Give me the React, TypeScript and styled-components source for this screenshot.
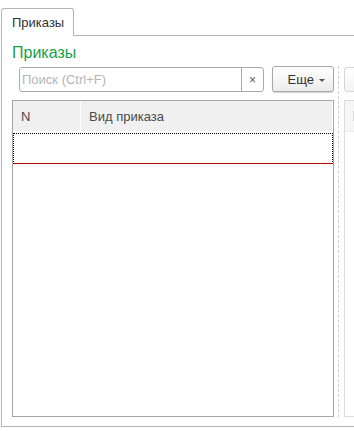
import React from "react";
import styled, { createGlobalStyle } from "styled-components";

const GlobalStyle = createGlobalStyle`
  html, body {
    margin: 0;
    padding: 0;
    background: #fff;
    overflow: hidden;
  }
  body {
    font-family: "Liberation Sans", Arial, sans-serif;
    font-size: 13px;
    color: #333;
  }
`;

const App = () => {
  return (
    <>
      <GlobalStyle />
      <Page>
        <TabBar>
          <Tab>Приказы</Tab>
          <TabFiller />
        </TabBar>
        <Frame>
          <MainColumn>
            <Title>Приказы</Title>
            <Toolbar>
              <SearchBox>
                <SearchInput placeholder="Поиск (Ctrl+F)" />
                <ClearButton>×</ClearButton>
              </SearchBox>
              <MoreButton>
                Еще <Caret />
              </MoreButton>
            </Toolbar>
            <Table>
              <HeaderRow>
                <HeaderCell $width="68px">N</HeaderCell>
                <HeaderCell $width="auto" $grow>
                  Вид приказа
                </HeaderCell>
              </HeaderRow>
              <SelectedRow />
            </Table>
          </MainColumn>
          <Splitter />
          <SideColumn>
            <SideToolbar>
              <DisabledButton />
            </SideToolbar>
            <SideTable>
              <SideHeader>
                <SideHeaderMark />
              </SideHeader>
            </SideTable>
          </SideColumn>
        </Frame>
      </Page>
    </>
  );
};

const Page = styled.div`
  width: 100%;
  padding-top: 8px;
  overflow: hidden;
`;

const TabBar = styled.div`
  display: flex;
  align-items: flex-end;
  padding-left: 1px;
`;

const Tab = styled.div`
  box-sizing: border-box;
  flex: none;
  width: 73px;
  height: 28px;
  padding: 6px 0 0 10px;
  border: 1px solid #b5b5b5;
  border-bottom: none;
  border-radius: 3px 3px 0 0;
  background: #fff;
  color: #333;
  font-size: 13px;
  line-height: 15px;
`;

const TabFiller = styled.div`
  flex: 1;
  height: 1px;
  background: #b5b5b5;
`;

const Frame = styled.div`
  box-sizing: border-box;
  display: flex;
  height: 391px;
  margin-left: 1px;
  padding: 8px 0 9px 10px;
  border-left: 1px solid #b5b5b5;
  border-bottom: 1px solid #b5b5b5;
  overflow: hidden;
`;

const MainColumn = styled.div`
  display: flex;
  flex: none;
  flex-direction: column;
  width: 322px;
`;

const Title = styled.div`
  height: 18px;
  color: #16a045;
  font-size: 16px;
  line-height: 18px;
`;

const Toolbar = styled.div`
  display: flex;
  align-items: flex-start;
  gap: 8px;
  height: 26px;
  margin-top: 4px;
  padding-left: 7px;
`;

const SearchBox = styled.div`
  box-sizing: border-box;
  display: flex;
  width: 245px;
  height: 25px;
  margin-top: 1px;
  border: 1px solid #a9a9a9;
  border-radius: 3px;
  background: #fff;
  overflow: hidden;
`;

const SearchInput = styled.input`
  flex: 1;
  min-width: 0;
  border: none;
  outline: none;
  padding: 0 0 0 2px;
  font-family: "Liberation Sans", Arial, sans-serif;
  font-size: 13px;
  color: #333;
  background: transparent;

  &::placeholder {
    color: #b5b5b5;
  }
`;

const ClearButton = styled.div`
  display: flex;
  align-items: center;
  justify-content: center;
  width: 21px;
  border-left: 1px solid #a9a9a9;
  color: #555;
  font-size: 12px;
`;

const MoreButton = styled.div`
  box-sizing: border-box;
  display: flex;
  align-items: center;
  justify-content: flex-end;
  gap: 5px;
  width: 62px;
  height: 26px;
  padding-right: 8px;
  border: 1px solid #a8a8a8;
  border-radius: 3px;
  background: linear-gradient(#ffffff, #ececec);
  box-shadow: 0 1px 1px rgba(0, 0, 0, 0.18);
  color: #333;
  font-size: 13px;
`;

const Caret = styled.span`
  width: 0;
  height: 0;
  margin-top: 2px;
  border-left: 3px solid transparent;
  border-right: 3px solid transparent;
  border-top: 3px solid #555;
`;

const Table = styled.div`
  box-sizing: border-box;
  flex: 1;
  margin-top: 8px;
  border: 1px solid #a5a5a5;
  background: #fff;
`;

const HeaderRow = styled.div`
  display: flex;
  height: 30px;
  background: #f0f0f0;
  border-right: 1px solid #fff;
`;

const HeaderCell = styled.div<{ $width: string; $grow?: boolean }>`
  box-sizing: border-box;
  display: flex;
  align-items: center;
  width: ${({ $width }) => $width};
  flex: ${({ $grow }) => ($grow ? 1 : "none")};
  padding-left: 8px;
  border-right: ${({ $grow }) => ($grow ? "none" : "1px solid #fff")};
  color: #4a4a4a;
  font-size: 13px;
`;

const SelectedRow = styled.div`
  position: relative;
  box-sizing: border-box;
  height: 31px;
  margin: 2px 0 0 0;
  border: 1px dotted #000;
  border-bottom: none;

  &::after {
    content: "";
    position: absolute;
    left: -1px;
    right: -1px;
    bottom: 0;
    height: 1px;
    background: repeating-linear-gradient(
      90deg,
      #000 0 1px,
      #d01010 1px 2px
    );
  }
`;

const Splitter = styled.div`
  flex: none;
  width: 0;
  margin: 22px 5px 0 4px;
  border-left: 1px dashed #cfcfcf;
`;

const SideColumn = styled.div`
  display: flex;
  flex: none;
  flex-direction: column;
  width: 100px;
  padding-top: 22px;
`;

const SideToolbar = styled.div`
  height: 26px;
`;

const DisabledButton = styled.div`
  box-sizing: border-box;
  width: 60px;
  height: 25px;
  margin-top: 1px;
  border: 1px solid #d6d6d6;
  border-radius: 3px;
  background: linear-gradient(#ffffff, #f3f3f3);
`;

const SideTable = styled.div`
  box-sizing: border-box;
  flex: 1;
  margin-top: 8px;
  border: 1px solid #dcdcdc;
`;

const SideHeader = styled.div`
  display: flex;
  align-items: center;
  height: 30px;
  padding-left: 8px;
  background: #f6f6f6;
  border-bottom: 1px solid #ececec;
`;

const SideHeaderMark = styled.span`
  width: 2px;
  height: 10px;
  background: #d8d8d8;
`;

export default App;
